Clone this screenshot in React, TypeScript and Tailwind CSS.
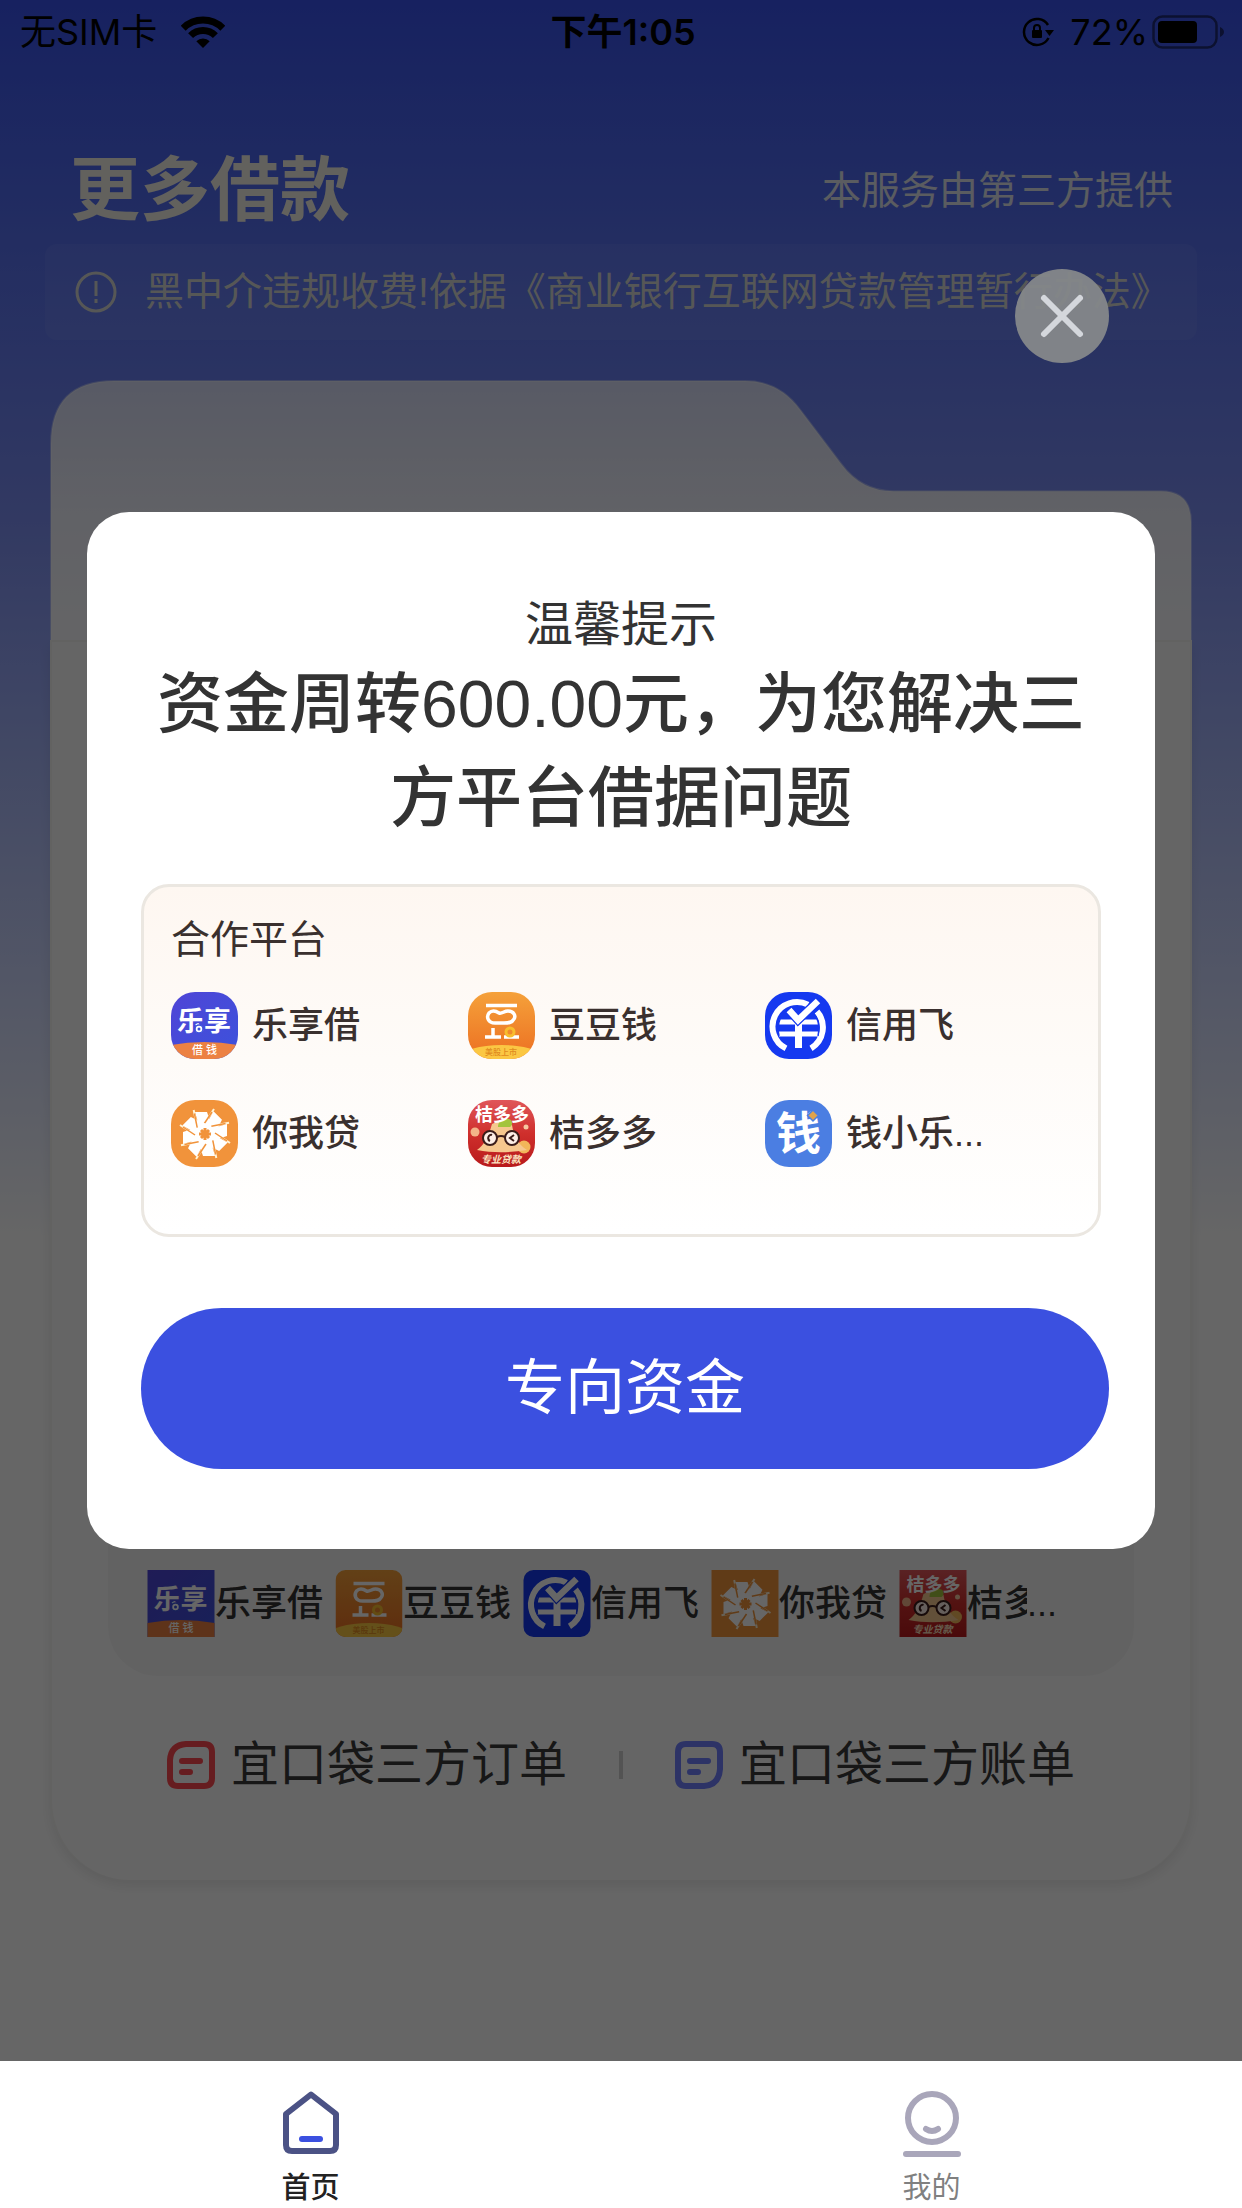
import { X } from "lucide-react";

const LexiangLogo = () => (
  <svg viewBox="0 0 67 67" className="block h-full w-full">
    <defs>
      <linearGradient id="lexiang" x1="0" y1="0" x2="1" y2="1">
        <stop offset="0" stopColor="#4f45d6" />
        <stop offset="1" stopColor="#3c52dc" />
      </linearGradient>
    </defs>
    <rect width="67" height="67" fill="url(#lexiang)" />
    <text x="6" y="39" fontSize="27" fontWeight="700" fill="#fff">
      乐享
    </text>
    <circle cx="28" cy="37" r="4" fill="#fff" stroke="#3c52dc" strokeWidth="1.5" />
    <circle cx="28" cy="37" r="1.5" fill="#3c52dc" />
    <path d="M0 53Q33 47 67 53V67H0z" fill="#ec8142" />
    <text x="21" y="62" fontSize="11" fill="#fff">
      借
    </text>
    <text x="35" y="62" fontSize="11" fill="#fff">
      钱
    </text>
  </svg>
);

const DoudouLogo = () => (
  <svg viewBox="0 0 67 67" className="block h-full w-full">
    <defs>
      <linearGradient id="doudou" x1="0" y1="0" x2="0" y2="1">
        <stop offset="0" stopColor="#f5a13a" />
        <stop offset="1" stopColor="#ec6f22" />
      </linearGradient>
      <clipPath id="doudouClip">
        <rect width="67" height="67" rx="10" />
      </clipPath>
    </defs>
    <g clipPath="url(#doudouClip)">
      <rect width="67" height="67" fill="url(#doudou)" />
      <g fill="none" stroke="#fff" strokeWidth="3.500">
        <path d="M18 13.500H49" />
        <path d="M27 31C20 31 18 25 21 21C24 18 28 19 31 21C34 22 36 19 40 19C46 19 48 24 46 27C44 31 40 31 36 31z" />
        <path d="M17 45H33M25 45V36M36 45H51" />
      </g>
      <circle cx="42" cy="40" r="4" fill="#f08a2c" stroke="#f8bd2e" strokeWidth="3" />
      <ellipse cx="33.500" cy="65" rx="40" ry="12" fill="#fbc743" />
      <text x="17" y="63" fontSize="8" fill="#e08a1e">
        美股上市
      </text>
    </g>
  </svg>
);

const XinyongLogo = () => (
  <svg viewBox="0 0 67 67" className="block h-full w-full">
    <rect width="67" height="67" rx="10" fill="#1539f0" />
    <g fill="none" stroke="#fff">
      <path d="M21 56.400A24.500 24.500 0 0 1 43 12.600" strokeWidth="6" />
      <path d="M52 19.500A24.500 24.500 0 0 1 46 56.400" strokeWidth="6" />
      <path d="M14 30H53M14 42H53" strokeWidth="5" />
      <path d="M33.500 29V56" strokeWidth="7" />
    </g>
    <path d="M24 18L33 28L53 9" fill="none" stroke="#1539f0" strokeWidth="9" />
    <path d="M24 18L33 28L53 9" fill="none" stroke="#fff" strokeWidth="6.500" />
    <path d="M14 44C11 30 17 20 24 16M53 44C55 34 53 26 48 21" fill="none" stroke="#1539f0" strokeWidth="1.500" />
  </svg>
);

const petals = [0, 45, 90, 135, 180, 225, 270, 315];

const NiwoLogo = () => (
  <svg viewBox="0 0 67 67" className="block h-full w-full">
    <rect width="67" height="67" fill="#f1933b" />
    {petals.map((angle) => (
      <g key={angle} transform={`rotate(${angle} 34 34)`}>
        <path d="M30 33L24 12H36L38 18L43 30z" fill="#fff" />
        <path d="M37 18L43 9" stroke="#fff3d6" strokeWidth="2" />
        <path d="M33 24L41 12" stroke="#f1933b" strokeWidth="1.500" />
      </g>
    ))}
    <path d="M34 28V40M28 34H40M30 30L38 38M38 30L30 38" stroke="#f1933b" strokeWidth="3" />
  </svg>
);

const JieduoLogo = () => (
  <svg viewBox="0 0 67 67" className="block h-full w-full">
    <defs>
      <linearGradient id="jieduo" x1="0" y1="0" x2="0" y2="1">
        <stop offset="0" stopColor="#e0565a" />
        <stop offset="0.5" stopColor="#cf2f2c" />
        <stop offset="1" stopColor="#b81a1c" />
      </linearGradient>
    </defs>
    <rect width="67" height="67" fill="url(#jieduo)" />
    <circle cx="7" cy="32" r="4.500" fill="#f3b489" />
    <circle cx="56" cy="47" r="6.500" fill="#f2b65a" />
    <circle cx="58" cy="27" r="2.500" fill="#f6c7a0" />
    <path d="M9 50C16 45 20 38 24 24C32 20 38 20 44 25C46 37 50 44 59 50C42 53 24 53 9 50z" fill="#f6c78e" />
    <path d="M30 27C30 20 36 17 39 19C44 18 46 24 42 27z" fill="#a3c43c" />
    <text x="7" y="21" fontSize="18" fontWeight="700" fill="#fff">
      桔多多
    </text>
    <g fill="#fdeee6" stroke="#3b1d1a" strokeWidth="2">
      <circle cx="22" cy="38" r="7" />
      <circle cx="44" cy="38" r="7" />
      <path d="M29 37Q33 35 37 37" fill="none" />
    </g>
    <path d="M24 35A2.500 3 0 1 0 22 41M46 35L42 38L46 41" fill="none" stroke="#3b1d1a" strokeWidth="2" />
    <text x="13" y="63" fontSize="10" fontWeight="700" fontStyle="italic" fill="#fbe3c0">
      专业贷款
    </text>
  </svg>
);

const QianxiaoLogo = () => (
  <svg viewBox="0 0 67 67" className="block h-full w-full">
    <rect width="67" height="67" fill="#4b7ee2" />
    <text x="11" y="50" fontSize="45" fontWeight="700" fill="#fff">
      钱
    </text>
    <path d="M48 10L53.500 15.500L48 21L42.500 15.500z" fill="#dfa24c" stroke="#4b7ee2" strokeWidth="1.500" />
  </svg>
);

const platforms = [
  { name: "乐享借", logo: <LexiangLogo /> },
  { name: "豆豆钱", logo: <DoudouLogo /> },
  { name: "信用飞", logo: <XinyongLogo /> },
  { name: "你我贷", logo: <NiwoLogo /> },
  { name: "桔多多", logo: <JieduoLogo /> },
  { name: "钱小乐...", logo: <QianxiaoLogo /> },
];

const StatusBar = () => (
  <div className="grid h-16 grid-cols-3 items-center pr-4 pl-5 font-['Inter','Noto_Sans_CJK_SC',sans-serif] text-4xl text-black">
    <div className="flex items-center gap-6">
      <span>无SIM卡</span>
      <svg viewBox="0 0 44 34" className="h-[34px] w-11">
        <g fill="none" stroke="#000" strokeWidth="7">
          <path d="M2.200 13.200A28 28 0 0 1 41.800 13.200" />
          <path d="M9.600 20.600A17.500 17.500 0 0 1 34.400 20.600" />
        </g>
        <path d="M15.300 26.300A9.500 9.500 0 0 1 28.700 26.300L22 33z" />
      </svg>
    </div>
    <div className="text-center font-semibold">下午1:05</div>
    <div className="flex items-center justify-end">
      <svg viewBox="0 0 32 30" className="mr-4 h-[30px] w-8">
        <path d="M26 8A13 13 0 1 0 26.500 21" fill="none" stroke="#000" strokeWidth="2.500" />
        <path d="M23 13H32L27.500 19z" />
        <rect x="10" y="13" width="10" height="8" rx="1" />
        <path d="M12 14V11A3 3 0 0 1 18 11V14" fill="none" stroke="#000" strokeWidth="2" />
      </svg>
      <span className="mr-1">72%</span>
      <svg viewBox="0 0 74 34" className="h-[34px] w-[74px]">
        <rect x="1.500" y="1.500" width="63" height="31" rx="9" fill="none" stroke="#000" strokeOpacity="0.5" strokeWidth="2.500" />
        <rect x="6" y="6" width="39" height="22" rx="4" />
        <path d="M68 12Q72 14 72 17Q72 20 68 22z" fillOpacity="0.5" />
      </svg>
    </div>
  </div>
);

const Header = () => (
  <header>
    <div className="flex h-[180px] items-center justify-between pt-[74px] pr-[69px] pl-[70px]">
      <h1 className="text-[70px] leading-none font-bold text-[#f6f3e8]">更多借款</h1>
      <p className="text-[39px] text-[#e2e6f0]">本服务由第三方提供</p>
    </div>
    <div className="mx-[45px] flex h-24 items-center gap-7 rounded-xl bg-white/5 pl-[30px] text-[39px] whitespace-nowrap text-[#d8dad8]">
      <svg viewBox="0 0 42 42" className="h-[42px] w-[42px] shrink-0">
        <circle cx="21" cy="21" r="19" fill="none" stroke="#d8dad8" strokeWidth="3" />
        <path d="M21 10V25M21 28V32" stroke="#d8dad8" strokeWidth="3" />
      </svg>
      <p>黑中介违规收费!依据《商业银行互联网贷款管理暂行办法》</p>
    </div>
  </header>
);

const LoanCard = () => (
  <section className="mx-[50px] mt-10">
    <svg viewBox="0 0 1140 260" className="block w-full">
      <defs>
        <linearGradient id="folder" x1="0" y1="0" x2="0" y2="1">
          <stop offset="0" stopColor="#fff" stopOpacity="0.76" />
          <stop offset="0.5" stopColor="#fff" stopOpacity="0.9" />
          <stop offset="1" stopColor="#fff" stopOpacity="0.96" />
        </linearGradient>
      </defs>
      <path
        d="M1 260V64Q1 1 64 1H694Q728 1 749 30L790 84Q810 111 842 111H1109Q1139 111 1139 142V260"
        fill="url(#folder)"
        stroke="#fff"
        strokeOpacity="0.35"
        strokeWidth="2"
      />
    </svg>
    <div className="rounded-b-[80px] border-x-2 border-t-2 border-[#f4f4f2] bg-[#fdfdfd] px-14 pt-[778px] pb-20 shadow-[0_6px_12px_rgba(0,0,0,0.08)]">
      <div className="flex h-64 items-end rounded-[50px] bg-[#f6f6f6] pr-14 pb-[39px] pl-[39px] text-4xl font-medium whitespace-nowrap text-[#333]">
        <ul className="flex gap-3">
          {platforms.slice(0, 4).map((item) => (
            <li key={item.name} className="flex items-center">
              <span className="h-[67px] w-[68px]">{item.logo}</span>
              <span>{item.name}</span>
            </li>
          ))}
          <li className="flex items-center">
            <span className="h-[67px] w-[68px]">{platforms[4].logo}</span>
            <span className="w-[60px] overflow-hidden">桔多</span>
            <span>...</span>
          </li>
        </ul>
      </div>
      <div className="mt-[54px] flex h-[70px] items-center justify-center text-5xl text-[#3a3a3a]">
        <a href="#orders" className="flex items-center gap-4">
          <svg viewBox="0 0 48 48" className="h-12 w-12">
            <g fill="none" stroke="#ff4a50" strokeWidth="6" strokeLinecap="round">
              <path d="M19 3H37Q45 3 45 11V37Q45 45 37 45H11Q3 45 3 37V19Q4 4 19 3z" />
              <path d="M15 20H33M15 31H23" />
            </g>
          </svg>
          宜口袋三方订单
        </a>
        <span className="mx-[52px] h-7 w-1 bg-[#cfcfcf]" />
        <a href="#bills" className="flex items-center gap-4">
          <svg viewBox="0 0 48 48" className="h-12 w-12">
            <g fill="none" stroke="#7080ff" strokeWidth="6" strokeLinecap="round">
              <path d="M11 3H37Q45 3 45 11V28Q44 44 29 45H11Q3 45 3 37V11Q3 3 11 3z" />
              <path d="M15 20H33M15 31H23" />
            </g>
          </svg>
          宜口袋三方账单
        </a>
      </div>
    </div>
  </section>
);

const NoticeDialog = () => (
  <div role="dialog" aria-modal="true" className="absolute inset-0 flex flex-col bg-black/60">
    <button
      aria-label="关闭"
      className="mt-[269px] mr-[133px] flex h-[94px] w-[94px] items-center justify-center self-end rounded-full bg-[#85888a]/95"
    >
      <X className="h-[72px] w-[72px] text-[#d4d7dc]" strokeWidth={2} />
    </button>
    <div className="mx-[87px] mt-[149px] rounded-[42px] bg-white pt-[81px] pb-20 text-[#333]">
      <p className="text-center text-5xl leading-[64px]">温馨提示</p>
      <h2 className="px-12 text-center text-[66px] leading-[94px] font-medium">
        资金周转600.00元，为您解决三方平台借据问题
      </h2>
      <div className="mx-[54px] mt-[39px] h-[353px] rounded-[28px] border-[3px] border-[#ebe7e1] bg-linear-to-b from-[#fef7f1] via-[#fefbf8] to-white pt-[25px] pr-9 pl-[27px] text-[#3a302e]">
        <h3 className="text-[39px] leading-[56px]">合作平台</h3>
        <ul className="mt-6 grid grid-cols-3 gap-y-[41px]">
          {platforms.map((item) => (
            <li key={item.name} className="flex items-center gap-3.5 text-4xl font-medium">
              <span className="h-[67px] w-[67px] overflow-hidden rounded-[24px]">{item.logo}</span>
              <span>{item.name}</span>
            </li>
          ))}
        </ul>
      </div>
      <div className="mt-[71px] pr-[46px] pl-[54px]">
        <button className="h-[161px] w-full rounded-full bg-[#3b50e0] text-6xl text-white">专向资金</button>
      </div>
    </div>
  </div>
);

const TabBar = () => (
  <nav className="grid grid-cols-2 bg-white pt-7 text-[29px] leading-10">
    <a href="#home" className="flex flex-col items-center font-medium text-[#222]">
      <svg viewBox="0 0 68 68" className="mb-[11px] h-[68px] w-[68px]">
        <path
          d="M34 5.500L59 25V56Q59 62 53 62H15Q9 62 9 56V25z"
          fill="none"
          stroke="#4b5285"
          strokeWidth="6"
          strokeLinejoin="round"
        />
        <path d="M25 50H43" stroke="#3b50e0" strokeWidth="6" strokeLinecap="round" />
      </svg>
      首页
    </a>
    <a href="#mine" className="flex flex-col items-center text-[#808080]">
      <svg viewBox="0 0 68 68" className="mb-[11px] h-[68px] w-[68px]">
        <g fill="none" stroke="#a9a6ba" strokeWidth="6" strokeLinecap="round">
          <circle cx="34" cy="29" r="24" />
          <path d="M28 40Q34 44 40 40" />
          <path d="M8 65H60" />
        </g>
      </svg>
      我的
    </a>
  </nav>
);

const App = () => {
  return (
    <div
      lang="zh-CN"
      className="flex min-h-screen flex-col bg-white font-['Liberation_Sans','Noto_Sans_CJK_SC',sans-serif]"
    >
      <main className="relative flex-1 bg-linear-to-b from-[#3a53f0] via-[#7d8ff5] via-25% to-white to-60% pb-40">
        <StatusBar />
        <Header />
        <LoanCard />
        <NoticeDialog />
      </main>
      <TabBar />
    </div>
  );
};

export default App;
